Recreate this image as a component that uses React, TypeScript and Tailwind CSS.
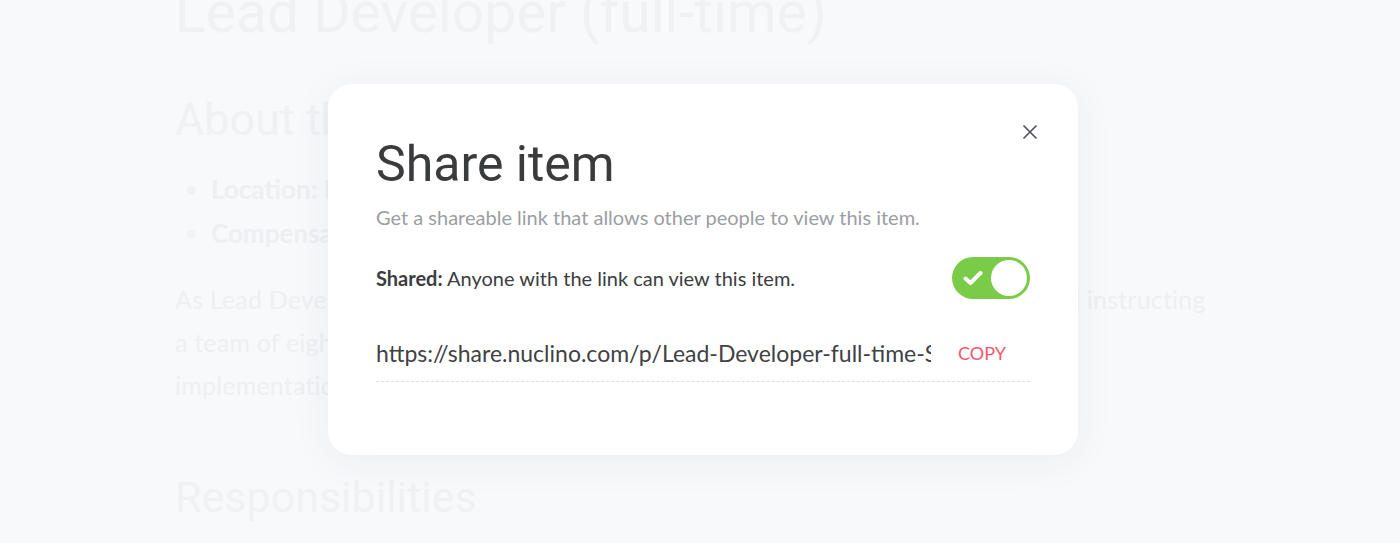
const bodyFont = "font-['Source_Sans_Pro','Lato','Noto_Sans',sans-serif]";

function CheckMark() {
  return (
    <svg width="20" height="16" viewBox="0 0 20 16" className="text-white">
      <polyline
        points="2.5,8.5 7.5,13 17.5,3"
        fill="none"
        stroke="currentColor"
        strokeWidth="4"
        strokeLinecap="round"
        strokeLinejoin="round"
      />
    </svg>
  );
}

function CloseIcon() {
  return (
    <svg width="14" height="14" viewBox="0 0 14 14" className="text-[#4f555c]">
      <path d="M1 1 13 13M13 1 1 13" stroke="currentColor" strokeWidth="1.7" strokeLinecap="round" />
    </svg>
  );
}

export default function App() {
  return (
    <div className="relative h-[543px] overflow-hidden bg-[#f8f9fb]">
      {/* page behind the overlay */}
      <div className="pl-[175px] text-[#eeeff2]">
        <h1 className="-mt-[21px] whitespace-nowrap font-['Roboto',sans-serif] text-[57px] leading-[68px] text-[#f0f1f3]">
          Lead Developer (full-time)
        </h1>
        <h2 className="mt-[46px] font-['Roboto',sans-serif] text-[45px] leading-[54px] text-[#f0f1f3]">
          About the role
        </h2>
        <ul className={`${bodyFont} mt-[20px] ml-[36px] list-disc text-[26px] font-bold leading-[44px] marker:text-[#f1f2f4]`}>
          <li>Location: Remote</li>
          <li>Compensation: competitive</li>
        </ul>
        <p className={`${bodyFont} mt-[23px] whitespace-nowrap text-[25px] leading-[43px] tracking-[0.2px]`}>
          As Lead Developer, you will be responsible for leading, mentoring, supporting and instructing
          <br />
          a team of eight engineers through the design, architecture and
          <br />
          implementation of new product features.
        </p>
        <h2 className="mt-[65px] font-['Roboto',sans-serif] text-[43px] leading-[50px] text-[#f0f1f3]">
          Responsibilities
        </h2>
      </div>

      {/* modal */}
      <div className="absolute inset-0 flex justify-center pl-[6px] pt-[84px]">
        <div className="relative h-[371px] w-[750px] rounded-[24px] bg-white px-12 pt-[50px] shadow-[0_6px_40px_rgba(40,50,70,0.06)]">
          <button className="absolute right-[41px] top-[41px] flex h-[14px] w-[14px] items-center justify-center">
            <CloseIcon />
          </button>
          <h3 className="font-['Roboto',sans-serif] text-[50px] leading-[60px] text-[#3a3b3d]">
            Share item
          </h3>
          <p className={`${bodyFont} mt-[11px] text-[20px] leading-[24px] text-[#9b9ea3]`}>
            Get a shareable link that allows other people to view this item.
          </p>
          <div className={`${bodyFont} mt-[28px] flex items-center justify-between text-[20px] text-[#3c3d3f]`}>
            <span>
              <b className="font-bold">Shared:</b> Anyone with the link can view this item.
            </span>
            <div className="flex h-[42px] w-[78px] items-center justify-between rounded-full bg-[#7acb48] pl-[11px] pr-[3px]">
              <CheckMark />
              <div className="h-[36px] w-[36px] rounded-full bg-white" />
            </div>
          </div>
          <div className={`${bodyFont} mt-[40px] flex items-center border-b border-dashed border-[#dddfe2] pb-[14px]`}>
            <div className="min-w-0 flex-1 overflow-hidden whitespace-nowrap text-[23px] leading-[28px] text-[#3f4245]">
              https://share.nuclino.com/p/Lead-Developer-full-time-SkZ8wqYB0
            </div>
            <button className="ml-[27px] mr-[24px] text-[18px] text-[#f2576a]">COPY</button>
          </div>
        </div>
      </div>
    </div>
  );
}
